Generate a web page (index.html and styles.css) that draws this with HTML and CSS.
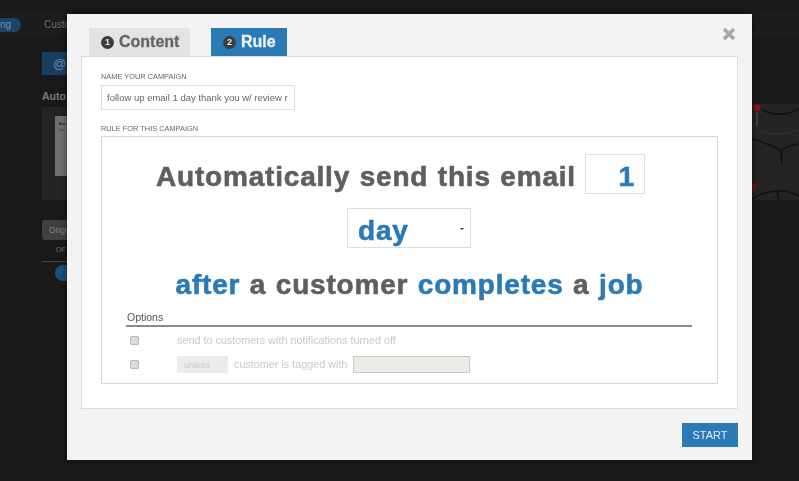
FILE: index.html
```html
<!DOCTYPE html>
<html lang="en">
<head>
    <meta charset="UTF-8">
    <meta name="viewport" content="width=device-width, initial-scale=1.0">
    <title>Campaign rule</title>
    <link rel="stylesheet" href="styles.css">
</head>
<body>
    <div class="page">
        <div class="topnav">
            <span class="nav-pill">ng</span>
            <span class="nav-link">Custo</span>
        </div>
        <div class="page-main">
            <div class="page-left">
                <div class="at-btn">@</div>
                <div class="auto-title">Auto</div>
                <div class="preview">
                    <div class="preview-paper"><b>Em</b><br>Lo</div>
                </div>
                <div class="ongoing-tab">Ongo</div>
                <div class="col-head">OF</div>
                <div class="toggle"></div>
            </div>
            <div class="map">
                <svg width="47" height="96" viewBox="0 0 47 96">
                    <path d="M11 6 Q28 15 47 5 M0 35 Q14 39 29 46 L30 60 M29 46 Q38 41 47 40 M0 95 Q10 88 25 87 Q36 86 47 92 M25 87 L27 95" fill="none" stroke="#111" stroke-width="1.5"/>
                    <path d="M3 26 Q24 34 47 26" fill="none" stroke="#303030" stroke-width="1"/>
                    <line x1="5" y1="8" x2="5" y2="22" stroke="#5a5a5a" stroke-width="1"/>
                    <circle cx="5" cy="3.500" r="3.500" fill="#8e0f12"/>
                    <circle cx="0" cy="83" r="4" fill="#7a0d10"/>
                </svg>
            </div>
        </div>
    </div>

    <div class="modal">
        <button type="button" class="close-btn">
            <svg width="14" height="14" viewBox="0 0 14 14"><path d="M2 2 L12 12 M12 2 L2 12" stroke="#a8a8a8" stroke-width="3.6" fill="none"/></svg>
        </button>
        <div class="tabs">
            <div class="tab tab-off"><span class="tab-num">1</span>Content</div>
            <div class="tab tab-on"><span class="tab-num">2</span>Rule</div>
        </div>
        <div class="panel">
            <label class="small-label" for="campaignName">NAME YOUR CAMPAIGN</label>
            <input class="name-input" type="text" id="campaignName" value="follow up email 1 day thank you w/ review r">
            <div class="small-label rule-label">RULE FOR THIS CAMPAIGN</div>
            <div class="rule-box">
                <div class="rule-line first-line">
                    <span>Automatically send this email</span>
                    <div class="num-box">1</div>
                </div>
                <div class="rule-line select-line">
                    <div class="unit-box">day<span class="caret"></span></div>
                </div>
                <div class="rule-line sentence">
                    <span><em>after</em> a customer <em>completes</em> a <em>job</em></span>
                </div>
                <div class="options">
                    <div class="options-title">Options</div>
                    <div class="option-row">
                        <input class="check" type="checkbox" disabled>
                        <span>send to customers with notifications turned off</span>
                    </div>
                    <div class="option-row">
                        <input class="check" type="checkbox" disabled>
                        <span class="unless">unless</span>
                        <span>customer is tagged with</span>
                        <span class="tag-input"></span>
                    </div>
                </div>
            </div>
        </div>
        <div class="footer">
            <button type="button" class="start-btn">START</button>
        </div>
    </div>
</body>
</html>
```

FILE: styles.css
```css
* {
    box-sizing: border-box;
}
html, body {
    height: 100%;
}
body {
    margin: 0;
    overflow: hidden;
    background: #191919;
    font-family: 'Liberation Sans', Arial, sans-serif;
    color: #666;
}

/* page behind the modal */
.page {
    height: 100%;
    padding-top: 12px;
}
.topnav {
    display: flex;
    align-items: center;
    height: 25px;
    background: #1c1c1c;
    font-size: 10px;
    color: #6e6e6e;
}
.nav-pill {
    display: flex;
    align-items: center;
    width: 21px;
    height: 14px;
    margin-right: 23px;
    border-radius: 0 7px 7px 0;
    background: #1b4468;
    color: #7d93a6;
}
.page-main {
    display: flex;
    justify-content: space-between;
}
.page-left {
    padding: 15px 0 0 42px;
    width: 67px;
    white-space: nowrap;
}
.at-btn {
    width: 25px;
    height: 23px;
    padding-left: 11px;
    background: #173f62;
    color: #6f8da6;
    font-size: 13px;
    line-height: 23px;
}
.auto-title {
    margin-top: 14px;
    font-size: 10.5px;
    font-weight: bold;
    line-height: 14px;
    color: #7a7a7a;
}
.preview {
    width: 25px;
    height: 93px;
    margin-top: 4px;
    padding: 9px 0 0 13px;
    background: #242424;
}
.preview-paper {
    width: 12px;
    height: 60px;
    padding: 5px 0 0 4px;
    background: #6f6f6f;
    font-size: 4px;
    line-height: 6px;
    color: #222;
}
.ongoing-tab {
    width: 25px;
    height: 20px;
    margin-top: 20px;
    padding-left: 7px;
    border-radius: 3px 0 0 3px;
    background: #404040;
    color: #808080;
    font-size: 8.5px;
    line-height: 20px;
}
.col-head {
    width: 25px;
    height: 22px;
    padding: 6px 0 0 14px;
    border-bottom: 1px solid #444;
    color: #707070;
    font-size: 7px;
}
.toggle {
    width: 12px;
    height: 16px;
    margin: 3px 0 0 13px;
    border-radius: 8px 0 0 8px;
    background: #1b4f7a;
}
.map {
    width: 47px;
    height: 96px;
    margin-top: 67px;
    background: #242424;
}
.map svg {
    display: block;
}

/* modal */
.modal {
    position: fixed;
    left: 67px;
    top: 14px;
    width: 685px;
    height: 446px;
    padding: 14px 14px 0;
    background: #f3f3f3;
    box-shadow: 0 0 6px rgba(0, 0, 0, 0.6);
}
.close-btn {
    position: absolute;
    right: 16px;
    top: 13px;
    padding: 0;
    border: none;
    background: none;
    line-height: 0;
}
.tabs {
    display: flex;
    gap: 21px;
    height: 28px;
    padding-left: 8px;
}
.tab {
    display: flex;
    align-items: center;
    padding: 0 0 0 12px;
    font-size: 16px;
    font-weight: bold;
    -webkit-text-stroke: 0.3px;
}
.tab-off {
    width: 101px;
    background: #e3e3e3;
    color: #666;
}
.tab-on {
    width: 76px;
    background: #2a7ab5;
    color: #eaf2f8;
}
.tab-num {
    flex-shrink: 0;
    width: 13px;
    height: 13px;
    margin-right: 5px;
    border-radius: 50%;
    background: #3c3c3c;
    color: #eee;
    font-size: 9px;
    line-height: 13px;
    text-align: center;
    -webkit-text-stroke: 0;
}
.panel {
    height: 353px;
    padding: 15px 19px 0;
    border: 1px solid #dcdcdc;
    background: #fff;
}
.small-label {
    display: block;
    height: 13px;
    font-size: 7.4px;
    line-height: 10px;
    color: #666;
}
.name-input {
    display: block;
    width: 194px;
    height: 25px;
    padding: 0 2px 0 5px;
    border: 1px solid #ddd;
    font-family: inherit;
    font-size: 9.5px;
    color: #666;
}
.rule-label {
    height: 12px;
    margin-top: 14px;
}
.rule-box {
    height: 248px;
    padding-top: 17px;
    border: 1px solid #d8d8d8;
}
.rule-line {
    display: flex;
    justify-content: center;
    align-items: center;
    gap: 9px;
    font-size: 28px;
    font-weight: bold;
    letter-spacing: 0.8px;
    word-spacing: 1px;
    -webkit-text-stroke: 0.6px;
    color: #5f5f5f;
}
.rule-line em {
    font-style: normal;
    color: #2a7ab5;
}
.first-line {
    padding-right: 18px;
}
.first-line span {
    padding-top: 6px;
}
.num-box {
    width: 60px;
    height: 40px;
    padding-right: 9px;
    border: 1px solid #ddd;
    color: #2a7ab5;
    line-height: 44px;
    text-align: right;
}
.select-line {
    margin-top: 14px;
    padding-right: 1px;
}
.unit-box {
    position: relative;
    width: 124px;
    height: 40px;
    padding-left: 10px;
    border: 1px solid #ddd;
    color: #2a7ab5;
    line-height: 44px;
}
.caret {
    position: absolute;
    right: 6px;
    top: 19px;
    border: 2px solid transparent;
    border-top-color: #333;
    border-bottom: none;
}
.sentence {
    margin-top: 21px;
}
.options {
    margin: 9px 25px 0 24px;
}
.options-title {
    height: 17px;
    margin-bottom: 1px;
    padding-left: 1px;
    border-bottom: 2px solid #8c8c8c;
    font-size: 10.5px;
    line-height: 14px;
    color: #555;
}
.option-row {
    display: flex;
    align-items: center;
    height: 24px;
    font-size: 10.8px;
    color: #c8c8c8;
}
.check {
    width: 9px;
    height: 9px;
    margin: 0 38px 0 4px;
    appearance: none;
    border: 1px solid #b4b4b4;
    border-radius: 2px;
    background: #dcdcdc;
}
.unless {
    width: 51px;
    height: 17px;
    margin-right: 6px;
    padding-left: 7px;
    background: #ececec;
    font-size: 9px;
    line-height: 18px;
}
.tag-input {
    width: 117px;
    height: 17px;
    margin-left: 6px;
    border: 1px solid #c9c9c2;
    background: #ecebe6;
}
.footer {
    display: flex;
    justify-content: flex-end;
    padding-top: 14px;
}
.start-btn {
    width: 56px;
    height: 24px;
    padding: 0;
    border: none;
    background: #2a7ab5;
    color: #e4eef6;
    font-family: inherit;
    font-size: 11px;
}
```
